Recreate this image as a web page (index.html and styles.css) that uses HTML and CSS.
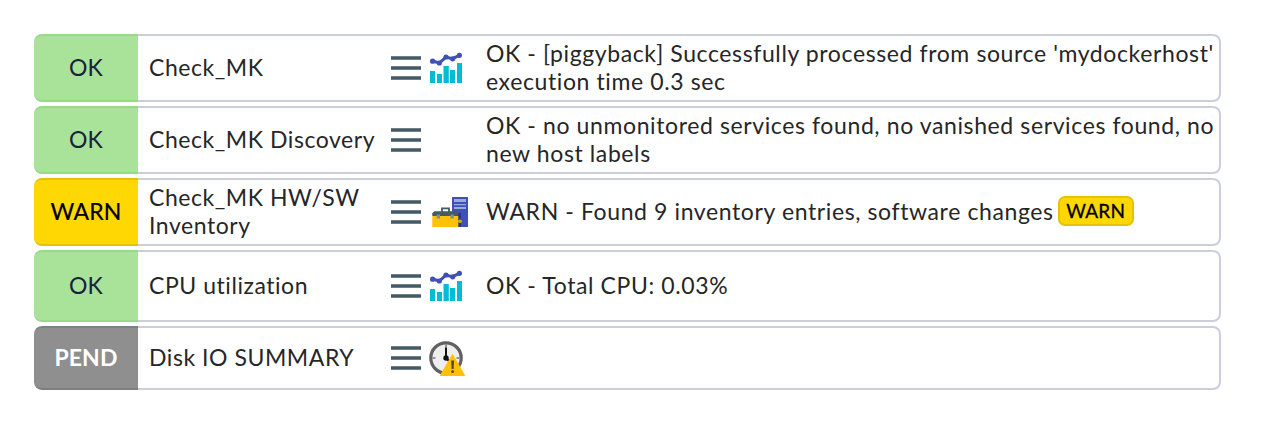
FILE: index.html
```
<!DOCTYPE html>
<html lang="en">
<head>
<meta charset="utf-8">
<title>Services</title>
<link rel="stylesheet" href="styles.css">
</head>
<body>
<svg width="0" height="0" class="defs">
  <symbol id="menu" viewBox="0 0 30 24"><path d="M0 2h30M0 12h30M0 22h30" stroke="#6f808a" stroke-width="4"/><path d="M0 2h30M0 12h30M0 22h30" stroke="#455a64" stroke-width="2"/></symbol>
  <symbol id="graph" viewBox="0 0 40 40">
    <path d="M2 23h5v12H2zM9 26h5v9H9zM15.500 18h5.300v17h-5.300zM22 22h5v13h-5zM29 15h5v20h-5z" fill="#00bcd4"/>
    <path d="M4.600 13.200 11.500 14.800 18 9.200 24.500 10.700 31.500 7.300" fill="none" stroke="#3f51b5" stroke-width="3"/>
    <g fill="#3f51b5"><circle cx="4.600" cy="13.200" r="2.600"/><circle cx="11.300" cy="15" r="2.600"/><circle cx="18" cy="9" r="2.600"/><circle cx="24.700" cy="10.800" r="2.600"/><circle cx="31.400" cy="7.300" r="2.600"/></g>
  </symbol>
  <symbol id="inventory" viewBox="0 0 40 40">
    <path d="M24 5h16v30H24z" fill="#3f51b5"/>
    <path d="M26 7h12v3H26zM26 12h12v1.200H26zM26 15h12v2H26z" fill="#9fa8da"/>
    <path d="M30 21h3v14h-3z" fill="#283593"/><path d="M29.500 28h2.500v2.500h-2.500z" fill="#8d8b3a"/><circle cx="32.200" cy="29.200" r="1.800" fill="#afb42b"/>
    <path d="M14 20v-3.700h7V20" fill="none" stroke="#455a64" stroke-width="1.800"/>
    <path d="M4.300 24v11h26V24z" fill="#ffc107"/><path d="M4.300 24v-2.800l2-2h22l2 2V24z" fill="#455a64"/>
    <path d="M8.700 22.500h3.300v4H8.700zM22.500 22.500h3.300v4h-3.300z" fill="#78909c"/>
  </symbol>
  <symbol id="pending" viewBox="0 0 40 40">
    <circle cx="18" cy="22" r="15.200" fill="#eee" stroke="#616161" stroke-width="3.200"/>
    <path d="M4.500 22h3M28.500 22h3M18 8.500v3" stroke="#757575" stroke-width="1.500"/>
    <path d="M18 11.500V22l4 4" stroke="#111" stroke-width="2" fill="none"/><circle cx="18" cy="22" r="2.700" fill="#111"/>
    <path d="M24.500 18.500 36.700 39.500h-24.400z" fill="#ffc107" stroke="#ffc107" stroke-width="1" stroke-linejoin="round"/>
    <path d="M23.100 24.500h3l-.5 8.500h-2z" fill="#5d4037"/><circle cx="24.600" cy="35.700" r="1.400" fill="#5d4037"/>
  </symbol>
</svg>
<main class="services">
  <div class="row ok">
    <div class="state">OK</div><div class="name">Check_MK</div>
    <div class="icons"><svg class="menu"><use href="#menu"/></svg><svg class="icon"><use href="#graph"/></svg></div>
    <div class="output">OK - [piggyback] Successfully processed from source 'mydockerhost'<br>execution time 0.3 sec</div>
  </div>
  <div class="row ok">
    <div class="state">OK</div><div class="name">Check_MK Discovery</div>
    <div class="icons"><svg class="menu"><use href="#menu"/></svg></div>
    <div class="output">OK - no unmonitored services found, no vanished services found, no<br>new host labels</div>
  </div>
  <div class="row warn">
    <div class="state">WARN</div><div class="name">Check_MK HW/SW<br>Inventory</div>
    <div class="icons"><svg class="menu"><use href="#menu"/></svg><svg class="icon"><use href="#inventory"/></svg></div>
    <div class="output with-badge">WARN - Found 9 inventory entries, software changes<span class="badge">WARN</span></div>
  </div>
  <div class="row ok tall">
    <div class="state">OK</div><div class="name">CPU utilization</div>
    <div class="icons"><svg class="menu"><use href="#menu"/></svg><svg class="icon"><use href="#graph"/></svg></div>
    <div class="output">OK - Total CPU: 0.03%</div>
  </div>
  <div class="row pend short">
    <div class="state">PEND</div><div class="name">Disk IO SUMMARY</div>
    <div class="icons"><svg class="menu"><use href="#menu"/></svg><svg class="icon"><use href="#pending"/></svg></div>
    <div class="output"></div>
  </div>
</main>
</body>
</html>
```
FILE: styles.css
```
* { box-sizing: border-box; }
body { margin: 0; background: #fff; color: #262626; font: 23px/28px Lato, sans-serif; letter-spacing: 0.61px; }
.defs { display: block; height: 0; }
.services { display: flex; flex-direction: column; gap: 4px; width: 1187px; margin: 34px 0 0 34px; }
.row { display: grid; grid-template-columns: 104px 252px 96px 1fr; height: 68px; border-radius: 8px; overflow: hidden; box-shadow: inset 0 0 0 2px #cccddd; align-items: center; white-space: nowrap; }
.tall { height: 72px; }
.short { height: 64px; }
.state { height: 100%; display: flex; align-items: center; justify-content: center; padding-bottom: 3px; border: solid; border-width: 2px 0; border-radius: 8px 0 0 8px; letter-spacing: 0.1px; }
.ok .state { background: #a9e299; border-color: #97db84; color: #15233c; }
.warn .state { background: #ffd703; border-color: #e6c207; color: #000; -webkit-text-stroke: 0.2px #000; }
.pend .state { background: #8f8f8f; border-color: #7f7f7f; color: #fff; font-weight: 700; }
.name { padding: 0 0 3px 11px; letter-spacing: 0.55px; }
.output { padding-bottom: 3px; }
.with-badge { display: flex; align-items: center; gap: 4px; }
.icons { display: flex; align-items: center; gap: 7px; }
.icons .menu { width: 30px; height: 24px; margin-left: 1px; }
.icon { width: 40px; height: 40px; }
.short .icon { margin-top: -4px; }
.badge { height: 30px; width: 76px; text-align: center; border: 2px solid #e6c207; border-radius: 7px; background: #ffd703; color: #000; font-size: 19px; line-height: 26px; letter-spacing: 0.2px; -webkit-text-stroke: 0.3px #000; margin-top: 1px; }
```
